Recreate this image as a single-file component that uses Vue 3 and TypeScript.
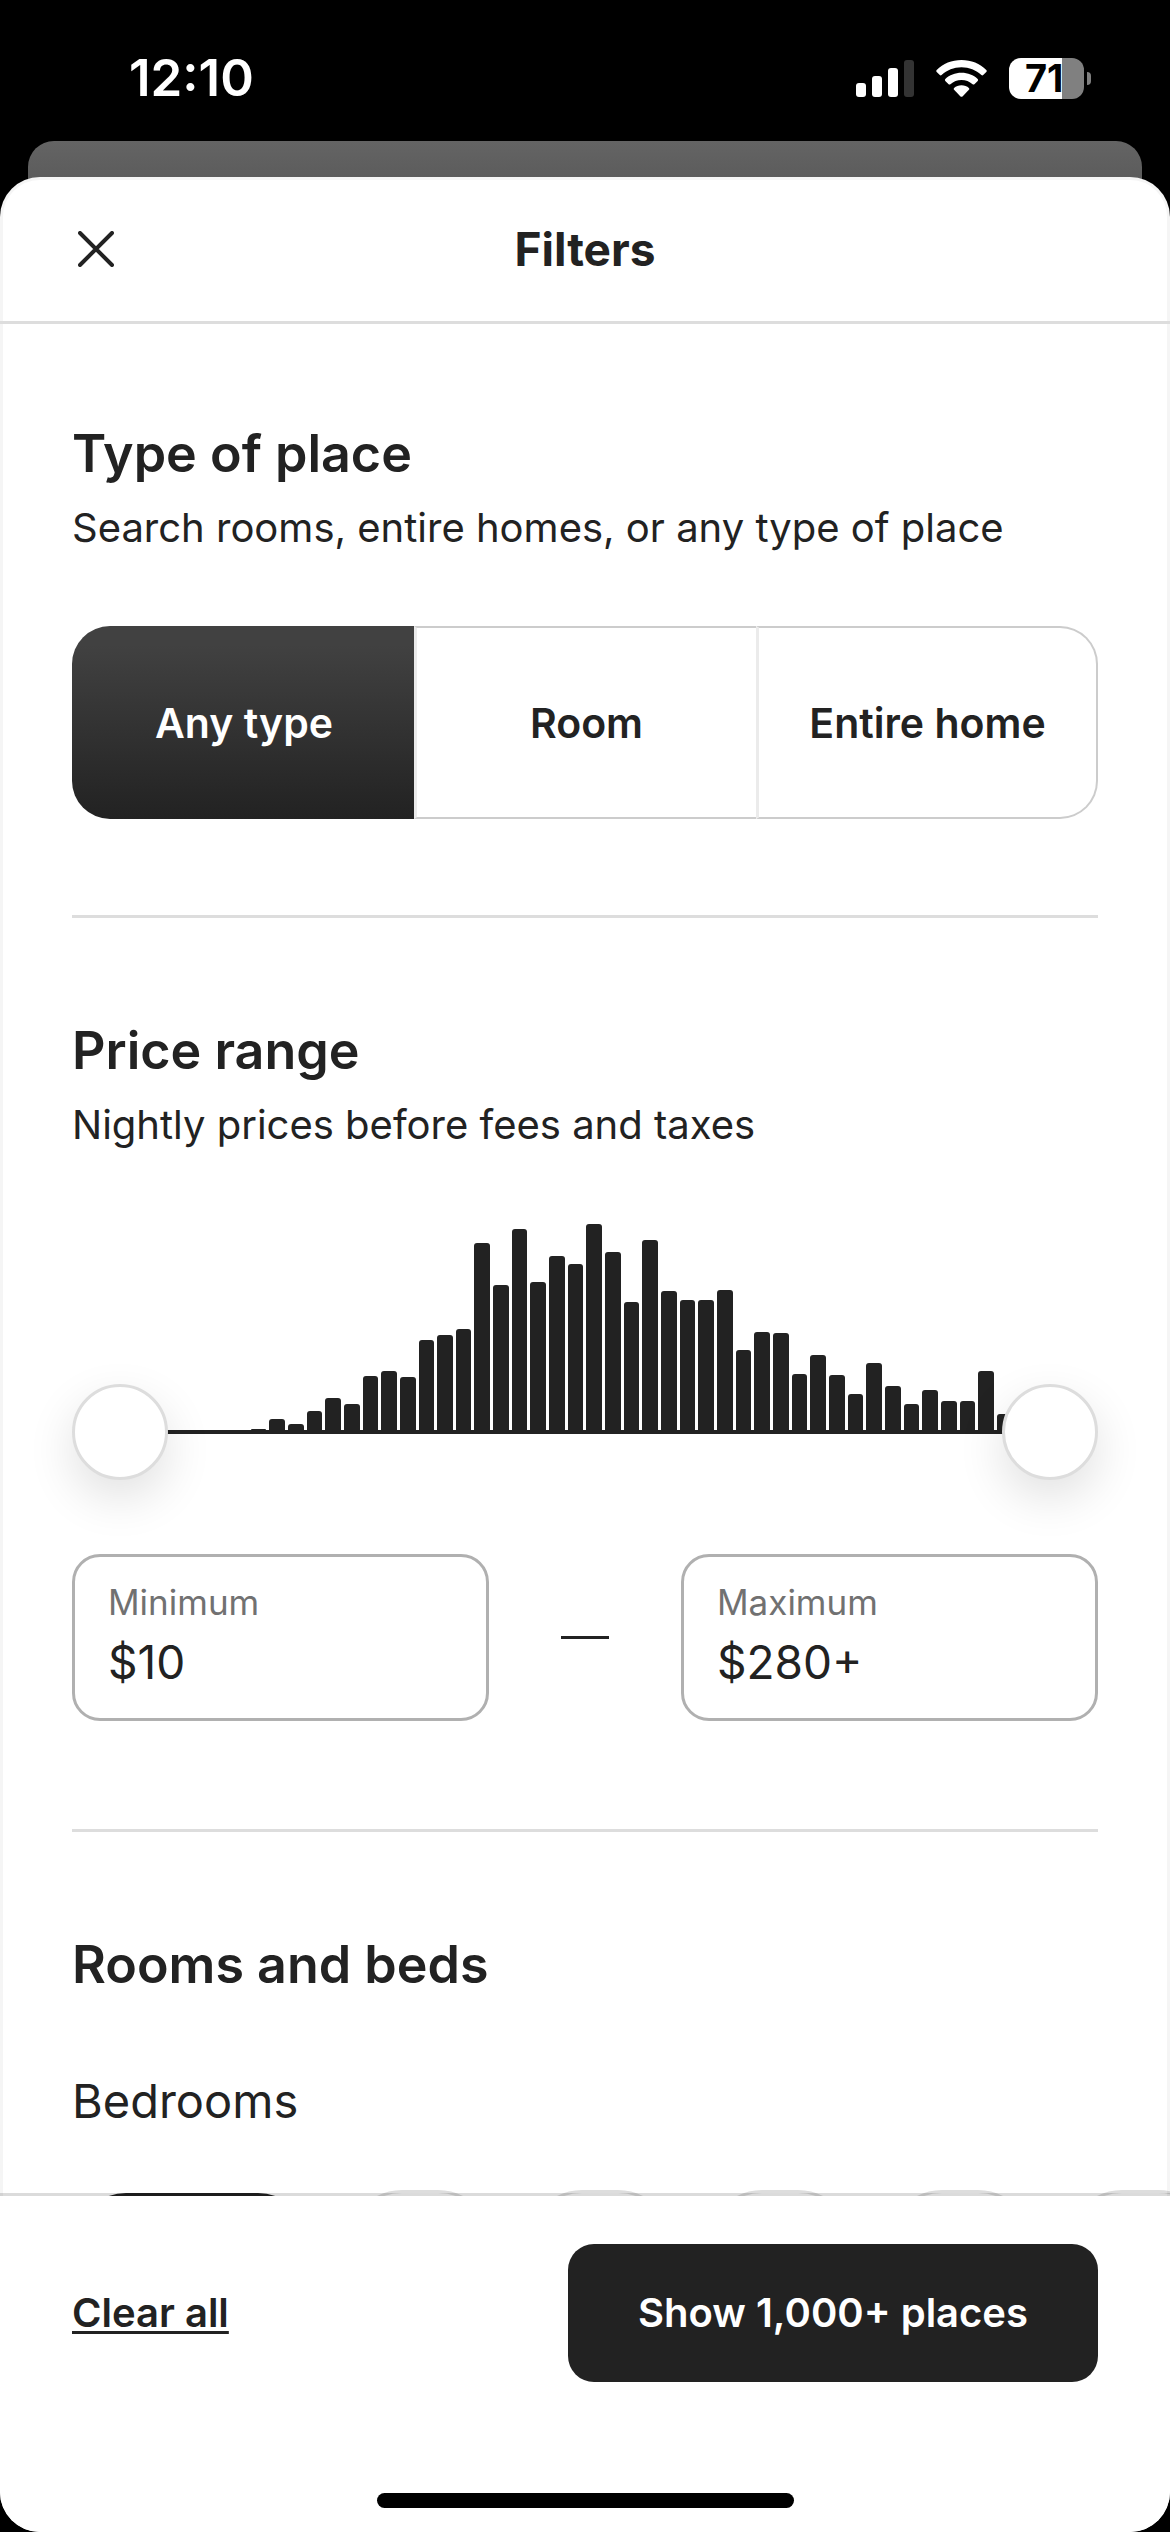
<script setup lang="ts">
import { ref } from 'vue'

const placeTypes: string[] = ['Any type', 'Room', 'Entire home']
const placeType = ref<string>('Any type')

// Number of listings per price bucket, from cheapest to dearest
const buckets: number[] = [
  0, 0, 0, 0, 0, 0, 0, 1, 11, 6, 19, 32, 26, 54, 59, 53, 90, 95, 101, 187,
  145, 201, 148, 174, 166, 206, 178, 128, 190, 139, 130, 130, 140, 80, 98, 97,
  56, 75, 55, 36, 67, 44, 26, 40, 29, 29, 59, 16, 8, 4,
]

const low = ref<number>(10)
const high = ref<number>(280)
const minimum = ref<string>('$10')
const maximum = ref<string>('$280+')

const bedroomOptions: string[] = ['Any', '1', '2', '3', '4', '5']
const bedrooms = ref<string>('Any')
</script>

<template>
  <div class="screen">
    <div class="status">
      <span class="time">12:10</span>
      <div class="status-icons">
        <svg class="signal" viewBox="0 0 58 37" aria-hidden="true">
          <rect x="0" y="23" width="10" height="14" rx="3" fill="#fff" />
          <rect x="16" y="16" width="10" height="21" rx="3" fill="#fff" />
          <rect x="32" y="8" width="10" height="29" rx="3" fill="#fff" />
          <rect x="48" y="0" width="10" height="37" rx="3" fill="#333" />
        </svg>
        <svg class="wifi" viewBox="0 0 51 37" aria-hidden="true">
          <g fill="#fff">
            <path d="M25.500 0C35.200 0 44 3.700 50.300 9.900Q51.200 10.900 50.300 11.900L47.200 15Q46.300 15.800 45.400 15C40.100 10 33.200 7.200 25.500 7.200S10.900 10 5.600 15Q4.700 15.800 3.800 15L.7 11.900Q-.2 10.900 .7 9.900C7 3.700 15.800 0 25.500 0Z" />
            <path d="M25.500 12.800C31.900 12.800 37.500 15.100 41.700 19Q42.600 19.900 41.700 20.900L38.400 24.200Q37.500 25 36.600 24.200C33.500 21.500 29.700 20 25.500 20S17.500 21.500 14.400 24.200Q13.500 25 12.600 24.200L9.300 20.900Q8.400 19.900 9.300 19C13.500 15.100 19.100 12.800 25.500 12.800Z" />
            <path d="M25.500 25.300C28.400 25.300 31 26.300 32.900 28Q33.700 28.900 32.900 29.800L26.500 36.400Q25.500 37.300 24.500 36.400L18.100 29.800Q17.300 28.900 18.100 28C20 26.300 22.600 25.300 25.500 25.300Z" />
          </g>
        </svg>
        <div class="battery">
          <span class="level">71</span>
          <span class="nub"></span>
        </div>
      </div>
    </div>

    <div class="back-sheet"></div>

    <main class="sheet">
      <header class="header">
        <button class="close" type="button" aria-label="Close">
          <svg viewBox="0 0 36 36" aria-hidden="true">
            <path d="M2 2L34 34M34 2L2 34" fill="none" stroke="#222" stroke-width="4" stroke-linecap="round" />
          </svg>
        </button>
        <h1>Filters</h1>
      </header>

      <div class="content">
        <section class="section">
          <h2>Type of place</h2>
          <p>Search rooms, entire homes, or any type of place</p>
          <div class="segments" role="radiogroup" aria-label="Type of place">
            <label
              v-for="type in placeTypes"
              :key="type"
              class="segment"
              :class="{ selected: placeType === type }"
            >
              <input v-model="placeType" type="radio" name="place-type" :value="type" />
              {{ type }}
            </label>
          </div>
        </section>

        <section class="section price">
          <h2>Price range</h2>
          <p>Nightly prices before fees and taxes</p>
          <div class="histogram">
            <div class="bars">
              <span v-for="(count, i) in buckets" :key="i" :style="{ height: count + 'px' }"></span>
            </div>
            <input v-model.number="low" type="range" min="10" max="280" aria-label="Minimum price" />
            <input v-model.number="high" type="range" min="10" max="280" aria-label="Maximum price" />
          </div>
          <div class="fields">
            <div class="field">
              <label for="minimum">Minimum</label>
              <input id="minimum" v-model="minimum" type="text" inputmode="numeric" />
            </div>
            <span class="dash"></span>
            <div class="field">
              <label for="maximum">Maximum</label>
              <input id="maximum" v-model="maximum" type="text" inputmode="numeric" />
            </div>
          </div>
        </section>

        <section class="section">
          <h2>Rooms and beds</h2>
          <h3>Bedrooms</h3>
          <div class="chips">
            <button
              v-for="option in bedroomOptions"
              :key="option"
              class="chip"
              :class="{ selected: bedrooms === option }"
              type="button"
              :aria-label="option"
              @click="bedrooms = option"
            ></button>
          </div>
        </section>
      </div>

      <footer class="footer">
        <div class="actions">
          <button class="clear" type="button">Clear all</button>
          <button class="show" type="button">Show 1,000+ places</button>
        </div>
        <div class="home-indicator"></div>
      </footer>
    </main>
  </div>
</template>

<style>
body {
  margin: 0;
  background: #000;
}
</style>

<style scoped>
.screen {
  display: flex;
  flex-direction: column;
  height: 100vh;
  background: #000;
  color: #222;
  font-family: Inter, "Liberation Sans", sans-serif;
}

.screen *,
.screen *::after {
  box-sizing: border-box;
}

button,
input {
  font: inherit;
  color: inherit;
}

button {
  padding: 0;
  border: 0;
  background: none;
  cursor: pointer;
}

/* Status bar */
.status {
  flex: none;
  display: flex;
  align-items: center;
  justify-content: space-between;
  height: 141px;
  padding: 15px 79px 0 129px;
  color: #fff;
}

.time {
  font-size: 51px;
  font-weight: 600;
  line-height: 60px;
}

.status-icons {
  display: flex;
  align-items: center;
  gap: 22px;
}

.signal {
  width: 58px;
  height: 37px;
}

.wifi {
  width: 51px;
  height: 37px;
}

.battery {
  display: flex;
  align-items: center;
  gap: 3px;
}

.level {
  width: 75px;
  height: 41px;
  padding-left: 16px;
  border-radius: 12px;
  background: linear-gradient(to right, #fff 71%, #808080 71%);
  color: #000;
  font-size: 38px;
  font-weight: 700;
  line-height: 41px;
}

.nub {
  width: 4px;
  height: 13px;
  border-radius: 0 4px 4px 0;
  background: #808080;
}

/* Sheets */
.back-sheet {
  flex: none;
  height: 76px;
  margin: 0 28px -40px;
  border-radius: 26px 26px 0 0;
  background: linear-gradient(#646464, #5c5c5c 36px);
}

.sheet {
  position: relative;
  flex: 1;
  display: flex;
  flex-direction: column;
  min-height: 0;
  overflow: hidden;
  border-radius: 40px;
  background: #fff;
}

.sheet::after {
  content: "";
  position: absolute;
  inset: 0;
  border: 3px solid rgba(0, 0, 0, 0.04);
  border-radius: inherit;
  pointer-events: none;
}

.header {
  z-index: 1;
  flex: none;
  display: grid;
  grid-template-columns: 1fr auto 1fr;
  align-items: center;
  height: 147px;
  padding: 0 78px;
  border-bottom: 3px solid #ddd;
}

.close {
  justify-self: start;
  width: 36px;
  height: 36px;
}

.close svg {
  display: block;
}

h1,
h2,
h3,
p {
  margin: 0;
}

h1 {
  font-size: 46px;
  font-weight: 700;
  line-height: 60px;
}

/* Scrolling content runs beneath the header and footer rules */
.content {
  flex: 1;
  min-height: 0;
  margin: -3px 0;
  padding: 0 72px;
  overflow: hidden auto;
  scrollbar-width: none;
}

.section {
  padding: 103px 0 96px;
  border-bottom: 3px solid #ddd;
}

.section.price {
  padding-bottom: 108px;
}

.section:last-child {
  border-bottom: 0;
}

h2 {
  font-size: 52px;
  font-weight: 600;
  line-height: 60px;
}

p {
  margin-top: 20px;
  font-size: 40px;
  line-height: 48px;
}

h3 {
  margin-top: 76px;
  font-size: 47px;
  font-weight: 400;
  line-height: 60px;
}

/* Type of place */
.segments {
  display: grid;
  grid-template-columns: repeat(3, 1fr);
  height: 193px;
  margin-top: 74px;
}

.segment {
  display: flex;
  align-items: center;
  justify-content: center;
  border: 0 solid #ccc;
  border-width: 2px 0;
  font-size: 41px;
  font-weight: 600;
  line-height: 48px;
  cursor: pointer;
}

.segment + .segment {
  border-left: 3px solid #ebebeb;
}

.segment:first-child {
  border-left-width: 2px;
  border-radius: 38px 0 0 38px;
}

.segment:last-child {
  border-right-width: 2px;
  border-radius: 0 38px 38px 0;
}

.segment.selected {
  border-color: transparent;
  background: linear-gradient(#414141 10%, #222) border-box;
  color: #fff;
}

.segment input {
  position: absolute;
  opacity: 0;
  pointer-events: none;
}

/* Price range */
.histogram {
  position: relative;
  margin-top: 74px;
  padding: 0 48px 46px;
}

.bars {
  display: flex;
  align-items: flex-end;
  gap: 3px;
  height: 211px;
  border-bottom: 4px solid #222;
}

.bars span {
  flex: 1;
  border-radius: 3px 3px 0 0;
  background: #222;
}

.histogram input {
  position: absolute;
  left: 0;
  bottom: 0;
  width: 100%;
  height: 96px;
  margin: 0;
  background: none;
  appearance: none;
  pointer-events: none;
}

.histogram input::-webkit-slider-thumb {
  width: 96px;
  height: 96px;
  border: 3px solid #ddd;
  border-radius: 50%;
  background: #fff;
  box-shadow: 0 18px 48px rgba(0, 0, 0, 0.12);
  appearance: none;
  pointer-events: auto;
}

.fields {
  display: grid;
  grid-template-columns: 1fr 48px 1fr;
  align-items: center;
  gap: 72px;
  margin-top: 74px;
}

.field {
  display: flex;
  flex-direction: column;
  gap: 9px;
  min-width: 0;
  padding: 24px 33px 26px;
  border: 3px solid #b0b0b0;
  border-radius: 28px;
}

.field label {
  color: #717171;
  font-size: 35px;
  line-height: 42px;
}

.field input {
  width: 100%;
  height: 60px;
  padding: 0;
  border: 0;
  outline: 0;
  background: none;
  font-size: 46px;
  line-height: 60px;
}

.dash {
  height: 3px;
  background: #222;
}

/* Rooms and beds */
.chips {
  display: flex;
  gap: 36px;
  margin: 59px -72px 0 0;
  overflow: hidden;
}

.chip {
  flex: none;
  width: 144px;
  height: 108px;
  border: 3px solid #ddd;
  border-radius: 54px;
}

.chip.selected {
  width: 240px;
  border-color: transparent;
  background: #222 padding-box;
}

/* Footer */
.footer {
  z-index: 1;
  flex: none;
  display: flex;
  flex-direction: column;
  gap: 111px;
  padding: 48px 72px 24px;
  border-top: 3px solid rgba(0, 0, 0, 0.14);
  background: #fff padding-box;
}

.actions {
  display: flex;
  align-items: center;
  justify-content: space-between;
}

.clear {
  font-size: 40px;
  font-weight: 600;
  line-height: 48px;
  text-decoration: underline;
  text-decoration-thickness: 3px;
  text-decoration-skip-ink: none;
  text-underline-offset: 4px;
}

.show {
  height: 138px;
  padding: 0 70px;
  border-radius: 26px;
  background: #222;
  color: #fff;
  font-size: 40px;
  font-weight: 600;
  line-height: 48px;
}

.home-indicator {
  align-self: center;
  width: 417px;
  height: 15px;
  border-radius: 8px;
  background: #000;
}
</style>
